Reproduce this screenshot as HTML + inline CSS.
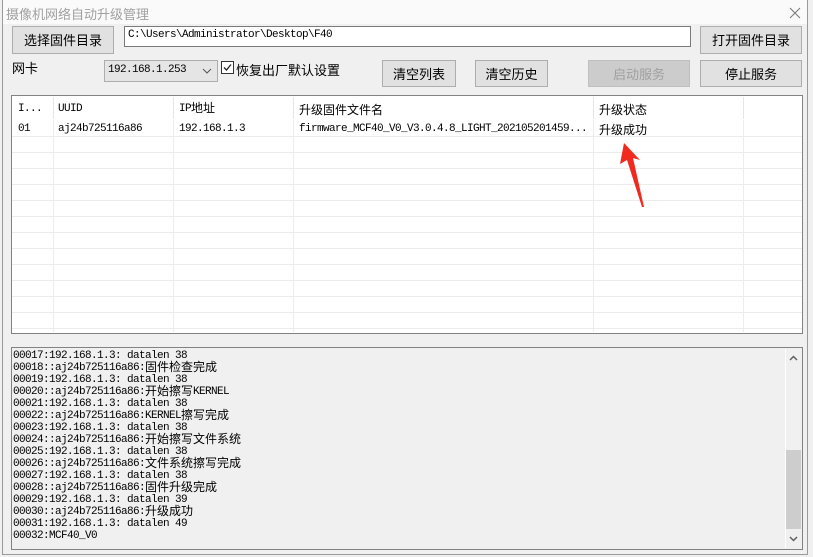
<!DOCTYPE html>
<html><head><meta charset="utf-8"><style>
*{margin:0;padding:0;box-sizing:border-box}
body{width:813px;height:557px;background:#f0f0f0;position:relative;overflow:hidden;font-family:"Liberation Sans","Noto Sans CJK SC",sans-serif;font-size:13px;color:#000}
.a{position:absolute}
.win{left:2px;top:-1px;width:806px;height:556px;border:1px solid #9a9a9a;background:#f0f0f0}
.title{left:3px;top:0;width:804px;height:24px;background:#fafafa}
.btn{position:absolute;background:#e1e1e1;border:1px solid #adadad;text-align:center;font-size:13px}
.c{font-family:"Noto Sans CJK SC",sans-serif;font-size:12px;letter-spacing:0}
.hl{position:absolute;left:12px;width:790px;height:1px;background:#ececec}
.vl{position:absolute;width:1px;background:#ececec;top:96px;height:236px}
.cell{position:absolute;font-family:"Liberation Mono",monospace;font-size:11px;letter-spacing:-0.6px;white-space:pre;height:14px;line-height:14px}
.log{position:absolute;left:13px;width:760px}
.log div{height:12px;line-height:12px;white-space:pre;font-family:"Liberation Mono",monospace;font-size:11px;letter-spacing:-0.6px;overflow:visible}
.log span,.cell span{display:inline-block;vertical-align:top;height:12px;line-height:12px;font-family:"Noto Sans CJK SC",sans-serif;font-size:12px;letter-spacing:0;position:relative;top:-1px}
.cell span{height:14px;line-height:14px}
</style></head><body>
<div class="a win"></div>
<div class="a title"></div>
<div class="a" style="left:6px;top:4px;color:#a0a0a0;font-size:13px">摄像机网络自动升级管理</div>
<svg class="a" style="left:789px;top:7px" width="12" height="12"><path d="M1 1L11 11M11 1L1 11" stroke="#777" stroke-width="1"/></svg>

<div class="btn" style="left:12px;top:26px;width:102px;height:28px;line-height:28px">选择固件目录</div>
<div class="a" style="left:124px;top:26px;width:567px;height:21px;background:#fff;border:1px solid #7a7a7a"></div>
<div class="cell" style="left:128px;top:28px">C:\Users\Administrator\Desktop\F40</div>
<div class="btn" style="left:700px;top:26px;width:102px;height:28px;line-height:28px">打开固件目录</div>

<div class="a" style="left:12px;top:58px">网卡</div>
<div class="a" style="left:104px;top:60px;width:114px;height:22px;background:#e5e5e5;border:1px solid #adadad"></div>
<div class="cell" style="left:108px;top:63px">192.168.1.253</div>
<svg class="a" style="left:202px;top:67px" width="10" height="8"><path d="M1 2L5 6L9 2" stroke="#555" fill="none"/></svg>
<div class="a" style="left:221px;top:61px;width:13px;height:13px;background:#fff;border:1px solid #333"></div>
<svg class="a" style="left:222px;top:62px" width="11" height="11"><path d="M2 5.5L4.5 8L9 2.5" stroke="#222" stroke-width="1.3" fill="none"/></svg>
<div class="a" style="left:236px;top:60px">恢复出厂默认设置</div>

<div class="btn" style="left:382px;top:60px;width:74px;height:27px;line-height:27px">清空列表</div>
<div class="btn" style="left:475px;top:60px;width:73px;height:27px;line-height:27px">清空历史</div>
<div class="btn" style="left:588px;top:60px;width:102px;height:27px;line-height:27px;background:#cccccc;border-color:#bfbfbf;color:#a0a0a0">启动服务</div>
<div class="btn" style="left:700px;top:60px;width:102px;height:27px;line-height:27px">停止服务</div>

<div class="a" style="left:11px;top:95px;width:792px;height:239px;background:#fff;border:1px solid #828282"></div>
<div class="vl" style="left:53px"></div><div class="vl" style="left:173px"></div><div class="vl" style="left:293px"></div><div class="vl" style="left:593px"></div><div class="vl" style="left:743px"></div>
<div class="hl" style="top:136px"></div><div class="hl" style="top:152px"></div><div class="hl" style="top:168px"></div><div class="hl" style="top:184px"></div><div class="hl" style="top:200px"></div><div class="hl" style="top:216px"></div><div class="hl" style="top:232px"></div><div class="hl" style="top:248px"></div><div class="hl" style="top:264px"></div><div class="hl" style="top:280px"></div><div class="hl" style="top:296px"></div><div class="hl" style="top:312px"></div><div class="hl" style="top:328px"></div>
<div class="a" style="left:12px;top:96px;width:790px;height:24px;background:#fff"></div>
<div class="a" style="left:53px;top:97px;width:1px;height:22px;background:#e5e5e5"></div><div class="a" style="left:173px;top:97px;width:1px;height:22px;background:#e5e5e5"></div><div class="a" style="left:293px;top:97px;width:1px;height:22px;background:#e5e5e5"></div><div class="a" style="left:593px;top:97px;width:1px;height:22px;background:#e5e5e5"></div><div class="a" style="left:743px;top:97px;width:1px;height:22px;background:#e5e5e5"></div>
<div class="cell" style="left:18px;top:102px">I...</div>
<div class="cell" style="left:58px;top:102px">UUID</div>
<div class="cell" style="left:179px;top:102px">IP<span>地址</span></div>
<div class="a c" style="left:299px;top:101px">升级固件文件名</div>
<div class="a c" style="left:599px;top:101px">升级状态</div>
<div class="cell" style="left:18px;top:122px">01</div>
<div class="cell" style="left:58px;top:122px">aj24b725116a86</div>
<div class="cell" style="left:179px;top:122px">192.168.1.3</div>
<div class="cell" style="left:299px;top:122px">firmware_MCF40_V0_V3.0.4.8_LIGHT_202105201459...</div>
<div class="a c" style="left:599px;top:121px">升级成功</div>
<svg class="a" style="left:615px;top:138px" width="35" height="75"><path d="M9 5L25 22L18 20L29 69L27 69L12 22L5 26Z" fill="#f02a1e"/></svg>

<div class="a" style="left:11px;top:347px;width:792px;height:203px;border:1px solid #828282;background:#f0f0f0"></div>
<div class="a" style="left:785px;top:349px;width:16px;height:199px;background:#f0f0f0;border-left:1px solid #fff"></div>
<div class="a" style="left:786px;top:450px;width:15px;height:79px;background:#cdcdcd"></div>
<svg class="a" style="left:789px;top:355px" width="9" height="6"><path d="M1 5L4.5 1.5L8 5" stroke="#606060" stroke-width="1.5" fill="none"/></svg>
<svg class="a" style="left:789px;top:536px" width="9" height="6"><path d="M1 1L4.5 4.5L8 1" stroke="#606060" stroke-width="1.5" fill="none"/></svg>
<div class="log" style="top:350px">
<div>00017:192.168.1.3: datalen 38</div>
<div>00018::aj24b725116a86:<span>固件检查完成</span></div>
<div>00019:192.168.1.3: datalen 38</div>
<div>00020::aj24b725116a86:<span>开始擦写</span>KERNEL</div>
<div>00021:192.168.1.3: datalen 38</div>
<div>00022::aj24b725116a86:KERNEL<span>擦写完成</span></div>
<div>00023:192.168.1.3: datalen 38</div>
<div>00024::aj24b725116a86:<span>开始擦写文件系统</span></div>
<div>00025:192.168.1.3: datalen 38</div>
<div>00026::aj24b725116a86:<span>文件系统擦写完成</span></div>
<div>00027:192.168.1.3: datalen 38</div>
<div>00028::aj24b725116a86:<span>固件升级完成</span></div>
<div>00029:192.168.1.3: datalen 39</div>
<div>00030::aj24b725116a86:<span>升级成功</span></div>
<div>00031:192.168.1.3: datalen 49</div>
<div>00032:MCF40_V0</div>
</div>
</body></html>
